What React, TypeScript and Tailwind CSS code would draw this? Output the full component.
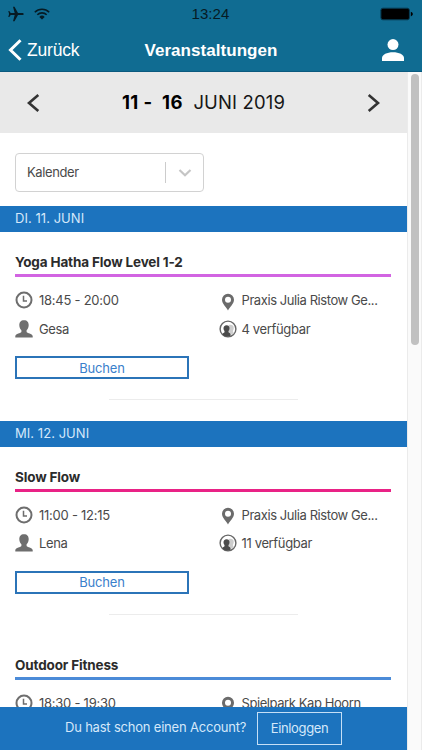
import React from "react";

const ClockIcon = () => (
  <svg width="18" height="18" viewBox="0 0 18 18" fill="none" stroke="#6e6e6e">
    <circle cx="9" cy="9" r="7.500" strokeWidth="2" />
    <path d="M8.500 4.800v5.100h3.500" strokeWidth="1.500" />
  </svg>
);

const TrainerIcon = () => (
  <svg width="18" height="18" viewBox="0 0 18 18" fill="#6e6e6e">
    <path d="M9 .2c3.300 0 4.700 2.100 4.700 4.900 0 2.200-.8 4-2.100 5.100v1.700c.6 1.400 5.700 1.500 6.100 4V17.500H.3v-1.600c.4-2.500 5.500-2.600 6.100-4v-1.700C5.100 9.100 4.300 7.300 4.300 5.100 4.300 2.300 5.700.2 9 .2z" />
  </svg>
);

const PinIcon = () => (
  <svg width="18" height="18" viewBox="0 0 18 18" fill="#6b6b6b">
    <path fillRule="evenodd" d="M9 .8a6 6 0 0 0-6 6c0 4 4.500 7.500 6 10.600 1.500-3.100 6-6.600 6-10.600a6 6 0 0 0-6-6zm0 3a3 3 0 1 1 0 6 3 3 0 0 1 0-6z" />
  </svg>
);

const GroupIcon = () => (
  <svg width="18" height="18" viewBox="0 0 18 18">
    <circle cx="9" cy="9" r="7.900" fill="#fff" stroke="#666" strokeWidth="1.400" />
    <path d="M9.500 5.200c3-1.200 5.600.2 5.200 3.200-.2 1.500-.8 2-.8 3.100l.8 1.500-4.200 3z" fill="#cdcdcd" />
    <path d="M7.600 5.200c2.100 0 3.100 1.400 2.900 3.300-.1 1.200-.4 1.900-.9 2.500v1.200c.5.600 1.900.8 1.900 2.300v1.600c-2.600.9-6.300.4-8-1.700.2-1.100 1.400-1.500 2-2.100V11c-.6-.6-.9-1.400-1-2.500-.1-1.900 1-3.300 3.100-3.300z" fill="#4b4b4b" />
  </svg>
);

type EventProps = {
  title: string;
  line: string;
  time: string;
  trainer?: string;
  place: string;
  free?: string;
};

const Event = ({ title, line, time, trainer, place, free }: EventProps) => (
  <section className="flex h-[188.5px] shrink-0 flex-col px-[15px] pt-[21px]">
    <h2 className="h-[21px] text-[13.5px] leading-[19px] font-bold tracking-[-0.15px] whitespace-nowrap text-[#2b2b2b]">{title}</h2>
    <div className={`h-[3px] w-[376px] shrink-0 ${line}`} />
    <div className="mt-[9px] grid grid-cols-[203.5px_1fr] text-[13px] leading-[28.5px] whitespace-nowrap text-[#4a4a4a]">
      <div className="flex h-[28.5px] items-center gap-[6px]"><ClockIcon /><span className="tracking-[-0.25px]">{time}</span></div>
      <div className="flex h-[28.5px] items-center gap-[5px]"><span className="pt-[3px]"><PinIcon /></span><span className="tracking-[-0.42px]">{place}</span></div>
      {trainer && (
        <div className="flex h-[28.5px] items-center gap-[6px]"><TrainerIcon /><span className="tracking-[-0.4px]">{trainer}</span></div>
      )}
      {free && (
        <div className="flex h-[28.5px] items-center gap-[5px]"><GroupIcon /><span className="tracking-[-0.35px]">{free}</span></div>
      )}
    </div>
    {trainer && (
      <>
        <button className="mt-[13px] h-[23px] w-[174px] shrink-0 border-2 border-[#2b74b8] text-[13px] leading-[18px] tracking-[-0.15px] text-[#3a80cb]">Buchen</button>
        <div className="mt-[20px] ml-[94px] h-px w-[189px] shrink-0 bg-[#ececec]" />
      </>
    )}
  </section>
);

const DateBar = ({ children }: { children: React.ReactNode }) => (
  <div className="h-[26px] shrink-0 bg-[#1c73be] pl-[15px] text-[13px] leading-[25px] tracking-[0.05px] text-[#d5e8fa]">{children}</div>
);

export default function App() {
  return (
    <div className="flex h-[750px] w-[422px] flex-col overflow-hidden bg-white font-['Inter','Liberation_Sans',sans-serif]">
      <header className="h-[72px] shrink-0 border-b border-[#0b5a7f] bg-[#106c92] font-['Liberation_Sans',sans-serif]">
        <div className="grid h-[28px] grid-cols-3 items-center px-[8px]">
          <div className="flex items-center gap-[10px]">
            <svg width="16" height="16" viewBox="0 0 16 16" fill="#061b24">
              <path d="M15.800 8c0-.7-.8-1.100-1.800-1.100H10L6.500.8H5l1.700 6.100H2.700L1.300 5.100H.3L1.100 8l-.8 2.900h1l1.400-1.800h4L5 15.200h1.500L10 9.100h4c1 0 1.800-.4 1.800-1.100z" />
            </svg>
            <svg width="16" height="12" viewBox="0 0 16 12" fill="none" stroke="#061b24" strokeWidth="1.600">
              <path d="M.8 4.200a10.200 10.200 0 0 1 14.400 0M3.300 6.800a6.700 6.700 0 0 1 9.400 0" />
              <path d="M5.300 8.900a3.800 3.800 0 0 1 5.400 0L8 11.600z" fill="#061b24" stroke="none" />
            </svg>
          </div>
          <div className="pr-[1px] text-center text-[15px] tracking-[0.1px] text-[#061b24]">13:24</div>
          <svg className="ml-auto" width="34" height="14" viewBox="0 0 34 14">
            <rect x=".9" y="1.200" width="28.500" height="11.600" rx="2" fill="#000" stroke="#073c54" />
            <path d="M30.800 4.800c1.500.6 2 1.400 2 2.300s-.5 1.700-2 2.300z" fill="#000" />
          </svg>
        </div>
        <div className="grid h-[43px] grid-cols-[120px_1fr_120px] items-center px-[8px] text-white">
          <div className="flex items-center gap-[5px] text-[17.5px]">
            <svg width="14" height="22" viewBox="0 0 14 22" fill="none" stroke="#fff" strokeWidth="3"><path d="M12.500 1.200 2.500 11l10 9.800" /></svg>
            <span className="pt-[2px] tracking-[-0.2px]">Zurück</span>
          </div>
          <div className="pt-[2px] text-center text-[17px] font-bold tracking-[0.05px] whitespace-nowrap">Veranstaltungen</div>
          <svg className="mr-[10px] ml-auto" width="22" height="22" viewBox="0 0 22 22" fill="#fff">
            <circle cx="11" cy="5.600" r="5.500" /><path d="M0 22v-3c0-3.400 5-5.700 11-5.700s11 2.300 11 5.700v3z" />
          </svg>
        </div>
      </header>

      <div className="flex min-h-0 flex-1">
        <div className="flex w-[407px] shrink-0 flex-col">
          <div className="flex min-h-0 flex-1 flex-col overflow-hidden">
            <div className="flex h-[60.5px] shrink-0 items-center justify-between bg-[#e9e9e9] px-[26px]">
              <svg className="mt-[2px]" width="14" height="20" viewBox="0 0 14 20" fill="none" stroke="#333" strokeWidth="2.600"><path d="M12.300 2 3 10l9.300 8" /></svg>
              <div className="flex items-baseline text-[18.5px] leading-[28px] whitespace-pre text-[#161616]">
                <b className="w-[71.5px] font-bold tracking-[0.4px] text-black">11 -  16</b><span className="tracking-[0.15px]">JUNI 2019</span>
              </div>
              <svg className="mt-[2px]" width="14" height="20" viewBox="0 0 14 20" fill="none" stroke="#333" strokeWidth="2.600"><path d="m1.700 2 9.300 8-9.300 8" /></svg>
            </div>
            <div className="h-[73.5px] shrink-0 pt-[20.5px] pl-[15px]">
              <div className="flex h-[39px] w-[189px] items-center rounded-[4px] border-[1.5px] border-[#d2d2d2] pl-[11px]">
                <span className="w-[138px] text-[13px] tracking-[-0.4px] text-[#4a4a4a]">Kalender</span>
                <span className="h-[21px] w-px bg-[#ccc]" />
                <svg className="ml-[12px]" width="14" height="10" viewBox="0 0 14 10" fill="none" stroke="#c5c5c5" strokeWidth="2.200"><path d="m1.500 2 5.500 5.300 5.500-5.300" /></svg>
              </div>
            </div>
            <DateBar>DI. 11. JUNI</DateBar>
            <Event title="Yoga Hatha Flow Level 1-2" line="bg-[#d264e2]" time="18:45 - 20:00" trainer="Gesa" place="Praxis Julia Ristow Ge..." free="4 verfügbar" />
            <DateBar>MI. 12. JUNI</DateBar>
            <Event title="Slow Flow" line="bg-[#e92286]" time="11:00 - 12:15" trainer="Lena" place="Praxis Julia Ristow Ge..." free="11 verfügbar" />
            <Event title="Outdoor Fitness" line="bg-[#4b8bd8]" time="18:30 - 19:30" place="Spielpark Kap Hoorn" />
          </div>
          <footer className="flex h-[43px] shrink-0 items-center bg-[#1c73be] pl-[65px] text-[13px] whitespace-nowrap text-[#d5e8fa]">
            <span className="w-[192px] pb-[2px] tracking-[-0.2px]">Du hast schon einen Account?</span>
            <button className="h-[33px] w-[85px] border-[1.5px] border-[#c5dff6] tracking-[-0.35px]">Einloggen</button>
          </footer>
        </div>
        <div className="flex w-[15px] justify-center border-x border-[#ebebeb] bg-[#fafafa] pt-[2px]">
          <div className="h-[271px] w-[8px] rounded-full bg-[#c1c1c1]" />
        </div>
      </div>
    </div>
  );
}
